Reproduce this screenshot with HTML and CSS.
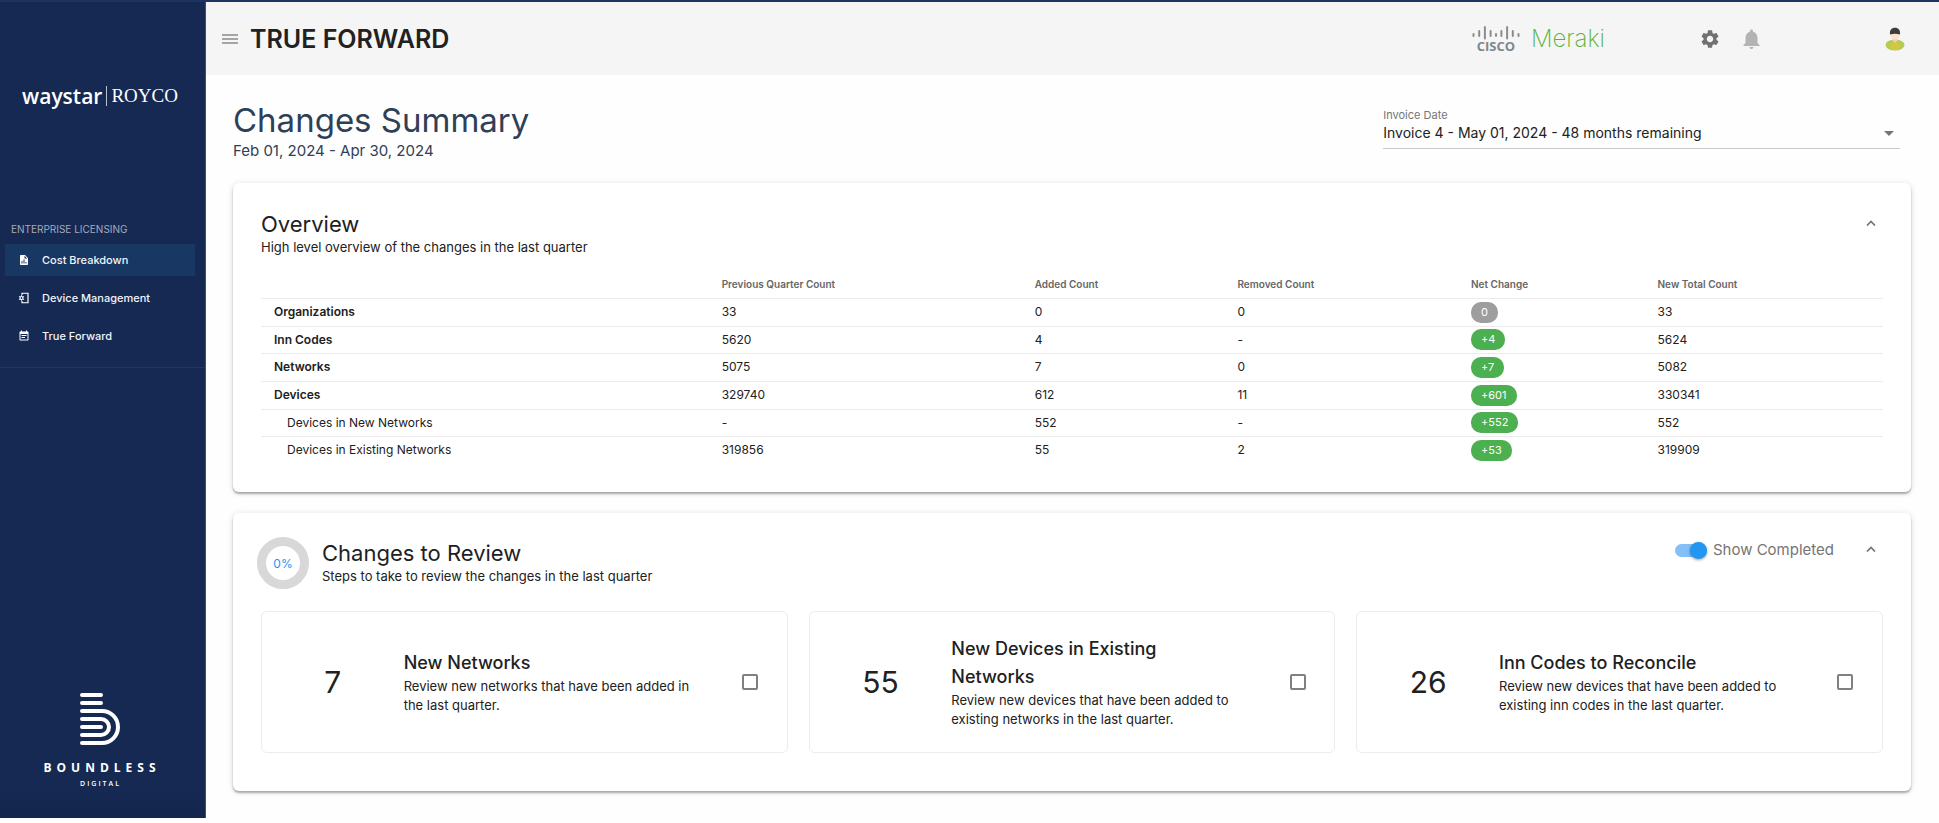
FILE: index.html
```html
<!DOCTYPE html>
<html lang="en">
<head>
    <meta charset="UTF-8">
    <meta name="viewport" content="width=device-width, initial-scale=1.0">
    <title>True Forward</title>
    <link rel="stylesheet" href="styles.css">
</head>
<body>
    <div class="app">
        <aside class="sidebar">
            <div class="brand">
                <span class="brand-name">waystar</span>
                <span class="brand-sub">ROYCO</span>
            </div>

            <nav class="side-nav">
                <p class="nav-title">ENTERPRISE LICENSING</p>
                <a href="#" class="nav-item active">
                    <svg viewBox="0 0 24 24" class="nav-icon"><path d="M14 2H6c-1.1 0-2 .9-2 2v16c0 1.1.9 2 2 2h12c1.1 0 2-.9 2-2V8l-6-6zM9 19H7v-5h2v5zm4 0h-2v-8h2v8zm4 0h-2v-3h2v3zM13 9V3.500L18.500 9H13z"/></svg>
                    Cost Breakdown
                </a>
                <a href="#" class="nav-item">
                    <svg viewBox="0 0 24 24" class="nav-icon">
                        <path d="M8 6V2.500h12v19H8V18" fill="none" stroke="#fff" stroke-width="2.4"/>
                        <circle cx="7" cy="12" r="3" fill="none" stroke="#fff" stroke-width="2.4"/>
                        <path d="M6 6.500h2v2H6zM6 15.500h2v2H6zM1.500 9l1.700-1 1 1.700-1.700 1zM1.500 15l1.700 1 1-1.700-1.700-1zM12.500 9l-1.700-1-1 1.700 1.700 1zM12.500 15l-1.700 1-1-1.700 1.700-1z"/>
                    </svg>
                    Device Management
                </a>
                <a href="#" class="nav-item">
                    <svg viewBox="0 0 24 24" class="nav-icon"><path d="M17 10H7v2h10v-2zm2-7h-1V1h-2v2H8V1H6v2H5c-1.110 0-2 .9-2 2v14c0 1.100.89 2 2 2h14c1.100 0 2-.9 2-2V5c0-1.100-.9-2-2-2zm0 16H5V8h14v11zm-5-5H7v2h7v-2z"/></svg>
                    True Forward
                </a>
            </nav>

            <div class="boundless">
                <svg viewBox="0 0 40 54" class="boundless-mark">
                    <path d="M2 3h19M2 11h19M2 19h20a16 16 0 0 1 0 32H2M2 27h19a8 8 0 0 1 0 16H2M2 35h19"/>
                </svg>
                <span class="boundless-name">BOUNDLESS</span>
                <span class="boundless-sub">DIGITAL</span>
            </div>
        </aside>

        <div class="page">
            <header class="topbar">
                <button class="icon-btn menu-btn" aria-label="Menu">
                    <svg viewBox="0 0 16 12"><path d="M0 2h16M0 6h16M0 10h16" stroke="#8a8a8a" stroke-width="1.5"/></svg>
                </button>
                <h1 class="topbar-title">TRUE FORWARD</h1>

                <div class="partner">
                    <div class="cisco">
                        <svg viewBox="0 0 48 14" class="cisco-bars"><path d="M1.500 8v2M7.200 5v5M12.900 1v11.500M18.600 5v5M24 8v2M29.400 5v5M35.100 1v11.500M40.800 5v5M46.500 8v2"/></svg>
                        <span class="cisco-name">CISCO</span>
                    </div>
                    <span class="meraki">Meraki</span>
                </div>

                <div class="topbar-actions">
                    <button class="icon-btn settings-btn" aria-label="Settings">
                        <svg viewBox="2 2 20 20" fill="#717171"><path d="M19.140 12.940c.04-.3.060-.61.060-.94 0-.32-.02-.64-.07-.94l2.030-1.580c.18-.14.23-.41.120-.61l-1.920-3.320c-.12-.22-.37-.29-.59-.22l-2.390.96c-.5-.38-1.030-.7-1.620-.94l-.36-2.540c-.04-.24-.24-.41-.48-.41h-3.840c-.24 0-.43.170-.47.410l-.36 2.540c-.59.240-1.130.570-1.620.940l-2.390-.96c-.22-.08-.47 0-.59.220L2.740 8.870c-.12.210-.08.470.120.610l2.030 1.580c-.05.300-.09.630-.09.940s.02.640.070.940l-2.030 1.580c-.18.140-.23.410-.12.610l1.920 3.320c.12.220.370.290.590.220l2.390-.96c.5.380 1.030.7 1.620.940l.36 2.540c.05.240.240.410.480.410h3.840c.24 0 .44-.17.470-.41l.36-2.540c.59-.24 1.130-.56 1.620-.94l2.390.96c.22.080.470 0 .59-.22l1.920-3.320c.12-.22.070-.47-.12-.61l-2.010-1.580zM12 15.600c-1.980 0-3.600-1.620-3.600-3.600s1.620-3.600 3.600-3.600 3.600 1.620 3.600 3.600-1.620 3.600-3.600 3.600z"/></svg>
                    </button>
                    <button class="icon-btn bell-btn" aria-label="Notifications">
                        <svg viewBox="3.5 2 17 20" fill="#b3b3b3"><path d="M12 22c1.100 0 2-.9 2-2h-4c0 1.100.89 2 2 2zm6-6v-5c0-3.070-1.640-5.640-4.500-6.320V4c0-.83-.67-1.500-1.500-1.500s-1.500.67-1.500 1.500v.68C7.630 5.360 6 7.920 6 11v5l-2 2v1h16v-1l-2-2z"/></svg>
                    </button>
                    <button class="icon-btn avatar-btn" aria-label="Account">
                        <svg viewBox="0 0 20 24">
                            <ellipse cx="10" cy="18" rx="9.5" ry="5.5" fill="#b5cb53"/>
                            <path d="M5 20a5 4 0 0 1 10 0c-1 4-9 4-10 0z" fill="#d6c642"/>
                            <path d="M7.500 10h5v3.500L10 16l-2.500-2.500z" fill="#f3cfae"/>
                            <circle cx="10" cy="8" r="4.5" fill="#fce3cc"/>
                            <path d="M5 7.500C4.500 3 6.500.8 10 .8S15.500 3 15 7.500c-3-1-7-1-10 0z" fill="#3d3d3f"/>
                        </svg>
                    </button>
                </div>
            </header>

            <main class="content">
                <div class="page-head">
                    <div>
                        <h2 class="page-title">Changes Summary</h2>
                        <p class="page-dates">Feb 01, 2024 - Apr 30, 2024</p>
                    </div>
                    <div class="invoice">
                        <label for="invoiceDate">Invoice Date</label>
                        <select id="invoiceDate">
                            <option>Invoice 4 - May 01, 2024 - 48 months remaining</option>
                        </select>
                        <svg viewBox="0 0 10 5" class="invoice-arrow"><path d="M0 0h10L5 5z" fill="#757575"/></svg>
                    </div>
                </div>

                <section class="card">
                    <div class="card-head">
                        <div>
                            <h3 class="card-title">Overview</h3>
                            <p class="card-desc">High level overview of the changes in the last quarter</p>
                        </div>
                        <button class="icon-btn collapse-btn" aria-label="Collapse overview">
                            <svg viewBox="0 0 10 6"><path d="M1 5.500l4-4 4 4" fill="none" stroke="#757575" stroke-width="1.7"/></svg>
                        </button>
                    </div>

                    <table class="overview">
                        <thead>
                            <tr>
                                <th class="col-name"></th>
                                <th class="col-prev">Previous Quarter Count</th>
                                <th class="col-added">Added Count</th>
                                <th class="col-removed">Removed Count</th>
                                <th class="col-net">Net Change</th>
                                <th class="col-total">New Total Count</th>
                            </tr>
                        </thead>
                        <tbody>
                            <tr>
                                <td class="name">Organizations</td>
                                <td>33</td>
                                <td>0</td>
                                <td>0</td>
                                <td><span class="chip chip-none">0</span></td>
                                <td>33</td>
                            </tr>
                            <tr>
                                <td class="name">Inn Codes</td>
                                <td>5620</td>
                                <td>4</td>
                                <td>-</td>
                                <td><span class="chip">+4</span></td>
                                <td>5624</td>
                            </tr>
                            <tr>
                                <td class="name">Networks</td>
                                <td>5075</td>
                                <td>7</td>
                                <td>0</td>
                                <td><span class="chip">+7</span></td>
                                <td>5082</td>
                            </tr>
                            <tr>
                                <td class="name">Devices</td>
                                <td>329740</td>
                                <td>612</td>
                                <td>11</td>
                                <td><span class="chip">+601</span></td>
                                <td>330341</td>
                            </tr>
                            <tr>
                                <td class="sub-name">Devices in New Networks</td>
                                <td>-</td>
                                <td>552</td>
                                <td>-</td>
                                <td><span class="chip">+552</span></td>
                                <td>552</td>
                            </tr>
                            <tr>
                                <td class="sub-name">Devices in Existing Networks</td>
                                <td>319856</td>
                                <td>55</td>
                                <td>2</td>
                                <td><span class="chip">+53</span></td>
                                <td>319909</td>
                            </tr>
                        </tbody>
                    </table>
                </section>

                <section class="card">
                    <div class="card-head review-head">
                        <div class="progress">0%</div>
                        <div>
                            <h3 class="card-title">Changes to Review</h3>
                            <p class="card-desc">Steps to take to review the changes in the last quarter</p>
                        </div>
                        <label class="toggle">
                            <input type="checkbox" class="toggle-input" checked>
                            <span class="toggle-track"></span>
                            Show Completed
                        </label>
                        <button class="icon-btn collapse-btn" aria-label="Collapse changes to review">
                            <svg viewBox="0 0 10 6"><path d="M1 5.500l4-4 4 4" fill="none" stroke="#757575" stroke-width="1.7"/></svg>
                        </button>
                    </div>

                    <div class="tasks">
                        <div class="task">
                            <span class="task-count">7</span>
                            <label for="taskNetworks" class="task-text">
                                <span class="task-title">New Networks</span>
                                <span class="task-desc">Review new networks that have been added in the last quarter.</span>
                            </label>
                            <input type="checkbox" id="taskNetworks" class="task-check">
                        </div>
                        <div class="task">
                            <span class="task-count">55</span>
                            <label for="taskDevices" class="task-text">
                                <span class="task-title">New Devices in Existing Networks</span>
                                <span class="task-desc">Review new devices that have been added to existing networks in the last quarter.</span>
                            </label>
                            <input type="checkbox" id="taskDevices" class="task-check">
                        </div>
                        <div class="task">
                            <span class="task-count">26</span>
                            <label for="taskInnCodes" class="task-text">
                                <span class="task-title">Inn Codes to Reconcile</span>
                                <span class="task-desc">Review new devices that have been added to existing inn codes in the last quarter.</span>
                            </label>
                            <input type="checkbox" id="taskInnCodes" class="task-check">
                        </div>
                    </div>
                </section>
            </main>
        </div>
    </div>
</body>
</html>
```

FILE: styles.css
```css
* {
    box-sizing: border-box;
}
body {
    margin: 0;
    background-color: #fefefe;
    font-family: Inter, "Liberation Sans", sans-serif;
    color: #212121;
}
h1, h2, h3, p {
    margin: 0;
}
.app {
    display: flex;
    min-height: calc(100vh - 6px);
    border-top: 2px solid #1c345f;
    margin-bottom: 6px;
}

/* sidebar */
.sidebar {
    width: 206px;
    flex-shrink: 0;
    display: flex;
    flex-direction: column;
    background: linear-gradient(#152953 96%, #13264d);
    border-right: 1px solid #3f5078;
    color: white;
}
.brand {
    display: flex;
    align-items: center;
    justify-content: center;
    gap: 4px;
    height: 32px;
    margin-top: 78px;
    padding-right: 5px;
}
.brand-name {
    font-family: "Open Sans", sans-serif;
    font-size: 21px;
    font-weight: 600;
    line-height: 20px;
}
.brand-sub {
    border-left: 1px solid #b9c0cf;
    padding-left: 4px;
    font-family: "Liberation Serif", serif;
    font-size: 19px;
    line-height: 20px;
}
.side-nav {
    margin-top: 109px;
    padding: 0 10px 15px 5px;
    border-bottom: 1px solid #24365a;
}
.nav-title {
    padding-left: 6px;
    margin-bottom: 7px;
    font-size: 10px;
    line-height: 16px;
    color: #a5abb8;
}
.nav-item {
    display: flex;
    align-items: center;
    gap: 12px;
    height: 32px;
    padding-left: 13px;
    margin-bottom: 6px;
    font-size: 11px;
    font-weight: 500;
    color: #f2f4f8;
    text-decoration: none;
}
.nav-item:last-child {
    margin-bottom: 0;
}
.nav-item.active {
    background-color: #183763;
}
.nav-icon {
    width: 12px;
    height: 12px;
    fill: white;
}
.boundless {
    display: flex;
    flex-direction: column;
    align-items: center;
    margin-top: auto;
    padding-right: 6px;
    padding-bottom: 28px;
    font-family: "Open Sans", sans-serif;
}
.boundless-mark {
    width: 40px;
    height: 54px;
    margin-bottom: 14px;
    fill: none;
    stroke: white;
    stroke-width: 4;
    stroke-linecap: round;
}
.boundless-name {
    padding-left: 5px;
    font-size: 12px;
    font-weight: 700;
    line-height: 16px;
    letter-spacing: 5px;
}
.boundless-sub {
    padding-left: 2px;
    margin-top: 2px;
    font-size: 7px;
    font-weight: 600;
    line-height: 12px;
    letter-spacing: 2px;
}

/* top bar */
.page {
    flex: 1;
    min-width: 0;
}
.topbar {
    display: flex;
    align-items: center;
    height: 73px;
    padding: 0 34px 0 16px;
    background-color: #f5f5f5;
}
.icon-btn {
    display: flex;
    align-items: center;
    justify-content: center;
    padding: 0;
    border: none;
    background: none;
    cursor: pointer;
}
.menu-btn svg {
    width: 16px;
    height: 12px;
}
.topbar-title {
    margin-left: 12px;
    font-size: 25px;
    font-weight: 600;
    line-height: 30px;
}
.partner {
    display: flex;
    align-items: center;
    gap: 11px;
    margin-left: auto;
}
.cisco {
    display: flex;
    flex-direction: column;
    align-items: center;
}
.cisco-bars {
    width: 48px;
    height: 14px;
    stroke: #8c8c8c;
    stroke-width: 2;
    stroke-linecap: round;
}
.cisco-name {
    font-family: "Open Sans", sans-serif;
    font-size: 13px;
    font-weight: 700;
    line-height: 12px;
    color: #858585;
}
.meraki {
    font-size: 24px;
    font-weight: 200;
    color: #5bb239;
}
.topbar-actions {
    display: flex;
    align-items: center;
    margin-left: 96px;
}
.settings-btn svg {
    width: 18px;
    height: 18px;
}
.bell-btn {
    margin-left: 24px;
}
.bell-btn svg {
    width: 17px;
    height: 20px;
}
.avatar-btn {
    margin-left: 125px;
}
.avatar-btn svg {
    width: 20px;
    height: 24px;
}

/* content */
.content {
    padding: 24px 28px 27px 27px;
}
.page-head {
    display: flex;
    justify-content: space-between;
    align-items: flex-start;
    height: 84px;
    padding-right: 11px;
    color: #2e4057;
}
.page-title {
    font-size: 33px;
    font-weight: 400;
    line-height: 42px;
}
.page-dates {
    font-size: 15px;
    line-height: 20px;
}
.invoice {
    position: relative;
    display: flex;
    flex-direction: column;
    width: 31%;
    margin-top: 8px;
}
.invoice label {
    font-size: 11px;
    line-height: 16px;
    color: #757575;
}
.invoice select {
    appearance: none;
    height: 26px;
    padding: 0 24px 6px 0;
    border: none;
    border-bottom: 1px solid #c8c8c8;
    background: none;
    font-family: inherit;
    font-size: 14px;
    color: #212121;
}
.invoice-arrow {
    position: absolute;
    right: 6px;
    bottom: 13px;
    width: 10px;
    height: 5px;
    pointer-events: none;
}
.card {
    padding: 28px;
    border-radius: 6px;
    background-color: white;
    box-shadow: 0 2px 2px rgba(0, 0, 0, 0.28), 0 1px 6px rgba(0, 0, 0, 0.14);
}
.card + .card {
    margin-top: 21px;
    padding-top: 24px;
    padding-bottom: 38px;
}
.card-head {
    display: flex;
    justify-content: space-between;
    align-items: flex-start;
}
.card-title {
    font-size: 22px;
    font-weight: 400;
    line-height: 26px;
}
.card-desc {
    font-size: 13px;
    line-height: 20px;
}
.collapse-btn {
    width: 24px;
    height: 24px;
}
.collapse-btn svg {
    width: 10px;
    height: 6px;
}

/* overview table */
.overview {
    width: 100%;
    margin-top: 14px;
    table-layout: fixed;
    border-collapse: collapse;
    font-size: 12px;
}
.overview th {
    height: 27px;
    padding: 0 13px;
    font-size: 10px;
    font-weight: 600;
    text-align: left;
    color: #666;
}
.overview td {
    height: 28px;
    padding: 0 13px;
    border-top: 1px solid #ebebeb;
    line-height: 16px;
}
.overview tr:nth-child(3n+2) td {
    height: 27px;
}
.overview .name {
    font-weight: 600;
}
.overview .sub-name {
    padding-left: 26px;
}
.col-name {
    width: 27.6%;
}
.col-prev {
    width: 19.3%;
}
.col-added {
    width: 12.5%;
}
.col-removed {
    width: 14.4%;
}
.col-net {
    width: 11.5%;
}
.chip {
    display: block;
    width: fit-content;
    padding: 0 10px;
    border-radius: 10px;
    background-color: #4caf50;
    font-size: 11px;
    line-height: 21px;
    color: white;
}
.chip-none {
    background-color: #9e9e9e;
}

/* changes to review */
.review-head {
    justify-content: flex-start;
}
.progress {
    display: flex;
    align-items: center;
    justify-content: center;
    width: 52px;
    height: 52px;
    margin: 0 13px 0 -4px;
    border: 9px solid #d8d8d8;
    border-radius: 50%;
    font-size: 12px;
    color: #2196f3;
}
.review-head .card-title {
    margin-top: 3px;
}
.toggle {
    display: flex;
    align-items: center;
    margin-left: auto;
    margin-right: 25px;
    font-size: 15px;
    line-height: 26px;
    color: #757575;
    cursor: pointer;
}
.toggle-input {
    appearance: none;
    width: 0;
    margin: 0;
}
.toggle-track {
    display: flex;
    align-items: center;
    width: 32px;
    height: 13px;
    margin-right: 6px;
    border-radius: 7px;
    background-color: #bdbdbd;
}
.toggle-track::after {
    content: "";
    width: 17px;
    height: 17px;
    border-radius: 50%;
    background-color: #fafafa;
    box-shadow: 0 1px 3px rgba(0, 0, 0, 0.4);
}
.toggle-input:checked + .toggle-track {
    justify-content: flex-end;
    background-color: #85bff8;
}
.toggle-input:checked + .toggle-track::after {
    background-color: #2196f3;
}
.tasks {
    display: grid;
    grid-template-columns: repeat(3, 1fr);
    gap: 21px;
    margin-top: 22px;
}
.task {
    display: grid;
    grid-template-columns: 27% 59% 14%;
    align-items: center;
    min-height: 142px;
    border: 1px solid #ececec;
    border-radius: 6px;
}
.task-count {
    font-size: 30px;
    text-align: center;
}
.task-text {
    padding-right: 20px;
}
.task-title {
    display: block;
    font-size: 18px;
    font-weight: 500;
    line-height: 28px;
}
.task-desc {
    display: block;
    font-size: 13px;
    line-height: 19px;
}
.task-check {
    appearance: none;
    justify-self: center;
    width: 16px;
    height: 16px;
    margin: 0;
    border: 2px solid #808080;
    border-radius: 2px;
}
.task-check:checked {
    background-color: #2196f3;
}
```
